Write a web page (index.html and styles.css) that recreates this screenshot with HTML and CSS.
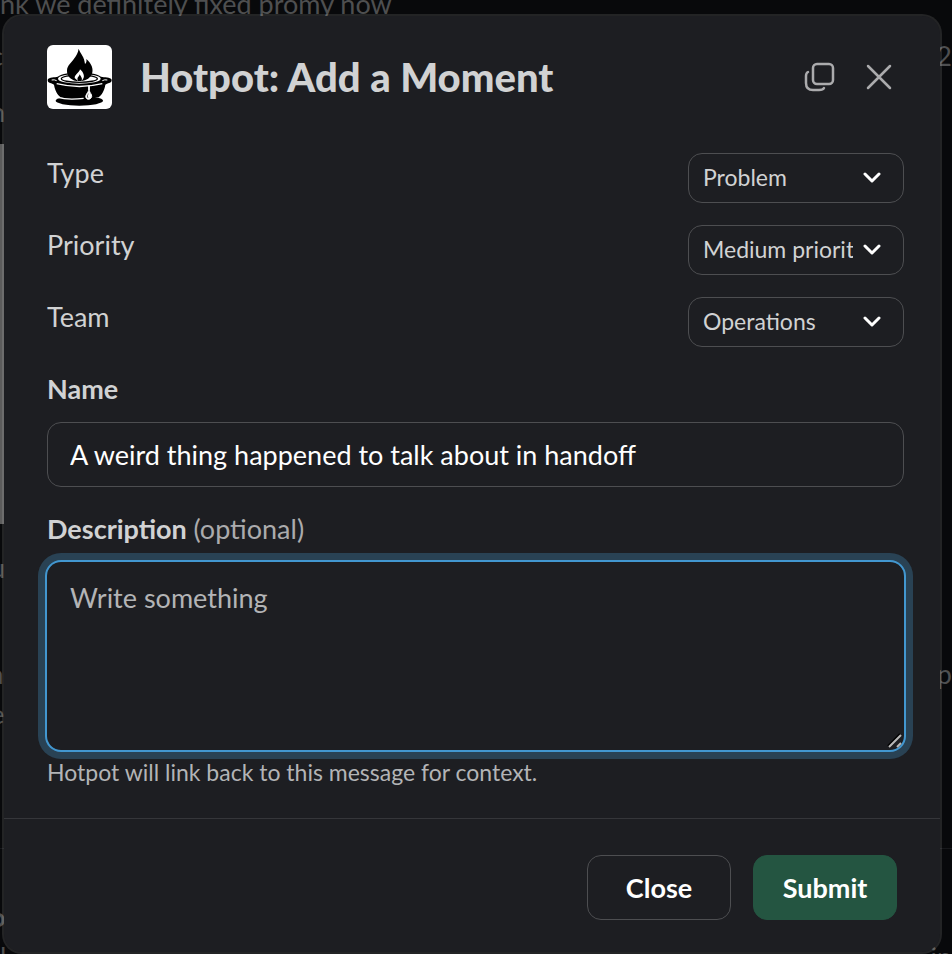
FILE: index.html
```html
<!DOCTYPE html>
<html lang="en">

<head>
    <meta charset="UTF-8">
    <meta name="viewport" content="width=device-width,initial-scale=1">
    <title>Hotpot: Add a Moment</title>
    <link rel="stylesheet" href="styles.css">
</head>

<body>
    <!-- channel behind the modal -->
    <main class="channel" aria-hidden="true">
        <p class="line">nk we definitely fixed promy now</p>
        <p class="line line-time"><span class="cut">c</span><span>2</span></p>
        <p class="line line-title"><span class="cut">n</span></p>
        <div class="attachment"></div>
        <p class="line line-caption"><span class="cut">u</span></p>
        <p class="line line-message"><span class="cut">a</span><span>p</span></p>
        <p class="line"><span class="cut">e</span></p>
        <hr>
        <p class="line line-author"><span class="cut">o</span></p>
        <p class="line"><span>l</span><span>in</span></p>
    </main>

    <div class="overlay">
        <form class="modal" role="dialog" aria-labelledby="title">
            <header class="modal-header">
                <svg class="app-icon" viewBox="0 0 195 192" aria-hidden="true">
                    <rect width="195" height="192" fill="#fff" />
                    <path d="M2 104C6 95 24 98 32 95C56 77 138 77 162 95C172 98 190 95 194 104C195 116 180 113 175 119C172 138 164 149 155 157H41C32 149 24 138 21 119C16 113 1 116 2 104Z" />
                    <ellipse cx="97" cy="101" rx="64" ry="15" fill="#fff" />
                    <ellipse cx="97" cy="101" rx="54" ry="11" fill="none" stroke="#000" stroke-width="4" />
                    <path d="M14 105Q22 103 29 107M166 107Q173 103 181 105" fill="none" stroke="#fff" stroke-width="3" />
                    <path d="M29 116Q97 133 166 116" fill="none" stroke="#fff" stroke-width="4" />
                    <path d="M95 11C101 28 112 34 114 57C119 53 119 48 118 42C134 56 140 72 135 86C131 97 119 107 102 108H88C70 105 59 92 60 76C61 62 73 53 80 43C88 32 93 24 95 11Z" />
                    <path d="M99 73C97 84 83 87 83 99L93 108C88 98 96 96 98 88C102 96 108 101 103 108C117 98 110 82 99 73Z" fill="#fff" />
                    <ellipse cx="97" cy="167" rx="71" ry="15" />
                    <path d="M32 157Q62 166 110 160" fill="none" stroke="#fff" stroke-width="4" />
                    <path d="M125 122V137C122 144 114 151 117 158C121 166 132 163 134 155C135 148 128 143 127 137V122Z" fill="#fff" stroke="#fff" stroke-width="3" />
                    <path d="M125 143Q117 156 124 160Q121 152 125 143Z" />
                </svg>
                <h1 id="title">Hotpot: Add a Moment</h1>
                <button class="icon-button" type="button" aria-label="Open in new window">
                    <svg width="32" height="32" viewBox="0 0 32 32">
                        <rect x="9" y="3" width="20" height="20" rx="4" />
                        <path d="M4 11Q2 12 2 15V22Q2 29 9 29H15Q19 29 20 27" />
                    </svg>
                </button>
                <button class="icon-button" type="button" aria-label="Close dialog">
                    <svg width="32" height="32" viewBox="0 0 32 32">
                        <path d="M4 5L26 27M26 5L4 27" />
                    </svg>
                </button>
            </header>

            <div class="modal-body">
                <div class="option">
                    <label for="type">Type</label>
                    <div class="select">
                        <select id="type">
                            <option>Problem</option>
                        </select>
                        <svg viewBox="0 0 18 12"><path d="M2 2L9 9L16 2" /></svg>
                    </div>
                </div>
                <div class="option">
                    <label for="priority">Priority</label>
                    <div class="select">
                        <select id="priority">
                            <option>Medium priority</option>
                        </select>
                        <svg viewBox="0 0 18 12"><path d="M2 2L9 9L16 2" /></svg>
                    </div>
                </div>
                <div class="option">
                    <label for="team">Team</label>
                    <div class="select">
                        <select id="team">
                            <option>Operations</option>
                        </select>
                        <svg viewBox="0 0 18 12"><path d="M2 2L9 9L16 2" /></svg>
                    </div>
                </div>

                <div class="field">
                    <label for="name">Name</label>
                    <input id="name" type="text" value="A weird thing happened to talk about in handoff">
                </div>
                <div class="field">
                    <label for="description">Description <span class="optional">(optional)</span></label>
                    <div class="textarea">
                        <textarea id="description" placeholder="Write something"></textarea>
                        <svg class="grip" viewBox="0 0 16 16"><path class="shade" d="M1 13L13 1" /><path d="M2 14L14 2M10 14L14 10" /></svg>
                    </div>
                </div>
                <p class="hint">Hotpot will link back to this message for context.</p>
            </div>

            <footer class="modal-footer">
                <button class="button" type="button">Close</button>
                <button class="button button-primary" type="submit">Submit</button>
            </footer>
        </form>
    </div>
</body>

</html>
```
FILE: styles.css
```css
* {
    box-sizing: border-box;
}

body {
    margin: 0;
    height: 100vh;
    overflow: hidden;
    background: #08090b;
    color: #d1d2d3;
    font-family: Lato, sans-serif;
    font-size: 27px;
    line-height: 40px;
}

button,
input,
select,
textarea {
    font: inherit;
    color: inherit;
}

h1,
p {
    margin: 0;
}

/* channel */

.channel {
    margin-top: -16px;
    color: #4e4f50;
}

.line {
    display: flex;
    justify-content: space-between;
    white-space: nowrap;
}

.cut {
    margin-left: -10px;
}

.line-time {
    margin-top: 12px;
}

.line-title {
    margin-top: 16px;
}

.line-caption {
    margin-top: 24px;
}

.line-message {
    margin-top: 66px;
}

.line-author {
    margin-top: 48px;
    font-weight: bold;
}

.attachment {
    height: 380px;
    margin-top: 12px;
    background: linear-gradient(to right, #5c5c5c 50%, #08090b 50%);
}

.channel hr {
    height: 1px;
    margin: 114px 0 0;
    border: 0;
    background: #17181b;
}

/* modal */

.overlay {
    position: absolute;
    top: 0;
    left: 0;
    width: 100%;
    padding: 14px 10px 0 2px;
}

.modal {
    border: 2px solid rgba(255, 255, 255, .11);
    border-radius: 20px;
    background: #1d1e22;
    background-clip: padding-box;
}

.modal-header {
    display: flex;
    align-items: center;
    gap: 28px;
    padding: 29px 44px 44px 43px;
}

.app-icon {
    width: 65px;
    height: 64px;
    border-radius: 6px;
}

.modal-header h1 {
    flex: 1;
    font-family: "Lato Black", Lato, sans-serif;
    font-size: 40px;
    font-weight: 900;
}

.icon-button {
    display: flex;
    padding: 0;
    border: 0;
    background: none;
}

.icon-button svg {
    fill: none;
    stroke: #ababad;
    stroke-width: 2.5;
    stroke-linecap: round;
}

.modal-body {
    padding: 0 36px 26px 43px;
}

.option {
    display: flex;
    justify-content: space-between;
    margin-bottom: 22px;
}

.select {
    position: relative;
    width: 216px;
    height: 50px;
}

.select select {
    width: 100%;
    height: 100%;
    padding: 0 50px 2px 14px;
    border: 1px solid #4d4e51;
    border-radius: 14px;
    background: none;
    font-size: 23px;
    appearance: none;
}

.select svg {
    position: absolute;
    top: 19px;
    right: 23px;
    width: 18px;
    height: 12px;
    fill: none;
    stroke: #fff;
    stroke-width: 3;
    stroke-linecap: round;
    stroke-linejoin: round;
    pointer-events: none;
}

.field label {
    display: block;
    margin-bottom: 13px;
    font-weight: bold;
}

.field .optional {
    color: #ababad;
    font-weight: normal;
}

.field input {
    display: block;
    width: 100%;
    height: 65px;
    margin-bottom: 22px;
    padding: 0 22px;
    border: 1px solid #4d4e51;
    border-radius: 14px;
    background: none;
    color: #fff;
}

.textarea {
    position: relative;
}

.textarea textarea {
    display: block;
    width: 100%;
    height: 188px;
    padding: 15px 22px;
    border: 1px solid transparent;
    border-radius: 14px;
    outline: 0;
    background: none;
    box-shadow: 0 0 0 2px #4297d0, 0 0 0 9px #294254;
    resize: none;
}

.textarea textarea::placeholder {
    color: #b3b4b6;
}

.grip {
    position: absolute;
    right: 1px;
    bottom: 1px;
    width: 16px;
    height: 16px;
    stroke: #b9b9b9;
    stroke-width: 2;
    pointer-events: none;
}

.grip .shade {
    stroke: #000;
}

.hint {
    margin-top: 2px;
    color: #b3b4b6;
    font-size: 23px;
}

.modal-footer {
    display: flex;
    justify-content: flex-end;
    gap: 22px;
    padding: 36px 43px 32px;
    border-top: 1px solid #35363a;
}

.button {
    width: 144px;
    height: 65px;
    padding: 0;
    border: 1px solid #4d4e51;
    border-radius: 14px;
    background: none;
    color: #fff;
    font-weight: bold;
}

.button-primary {
    border-color: #245541;
    background: #245541;
}
```
